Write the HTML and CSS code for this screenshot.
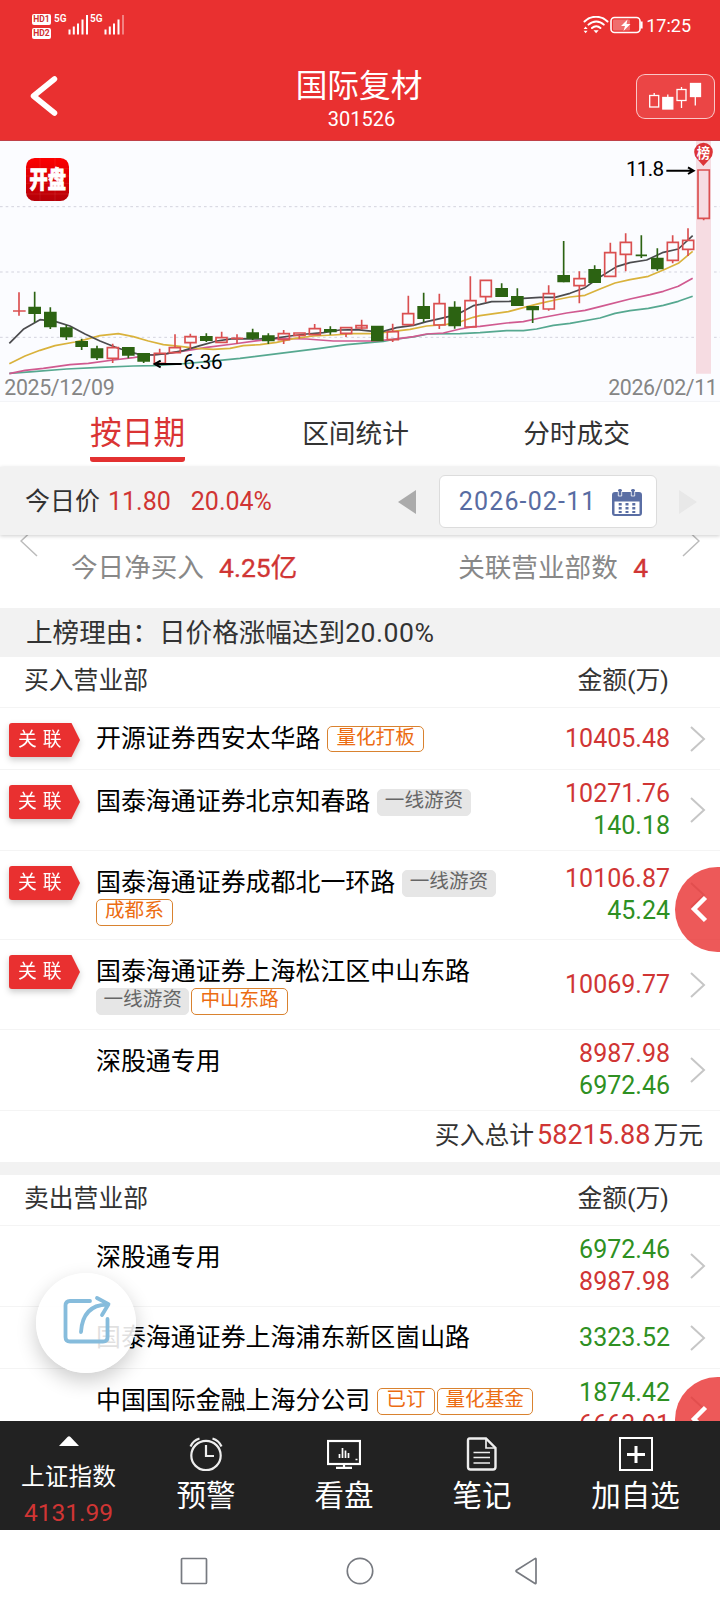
FILE: index.html
```
<!DOCTYPE html>
<html lang="zh-CN">
<head>
<meta charset="utf-8">
<title>国际复材 301526</title>
<link rel="stylesheet" href="styles.css">
</head>
<body>
<div class="screen">
  <header class="top">
    <div class="status">
      <div class="status-left">
        <div class="hd"><span>HD1</span><span>HD2</span></div>
        <span class="net">5G</span>
        <svg class="signal" width="21" height="20" viewBox="0 0 21 20"><path d="M1.500 19.500v-5M5.800 19.500v-8M10 19.500v-11M14.500 19.500v-15M19 19.500V0" stroke="#fff" stroke-width="2"/></svg>
        <span class="net net-second">5G</span>
        <svg class="signal" width="21" height="20" viewBox="0 0 21 20"><path d="M1.500 19.500v-5M5.800 19.500v-8M10 19.500v-11M14.500 19.500v-15" stroke="#fff" stroke-width="2"/><path d="M19 19.500V0" stroke="#fff" stroke-opacity=".4" stroke-width="2"/></svg>
      </div>
      <div class="status-right">
        <svg width="26" height="18" viewBox="0 0 26 18" fill="none" stroke="#fff" stroke-width="2" stroke-linecap="round"><path d="M1.500 5.500C8-.8 18-.8 24.500 5.500M5.500 8.600C10 4.300 16.500 4.300 20.800 8.600M9 12C11.500 9.800 15 9.800 17.400 12"/><path d="M10.500 14.200h5.200l-2.600 3zM.6 13l2-2.500 2 2.500zM.6 14.800l2 2.500 2-2.500z" fill="#fff" stroke="none"/></svg>
        <svg width="33" height="18" viewBox="0 0 33 18"><rect x="1" y="1.500" width="29" height="15" rx="3.500" fill="none" stroke="#fff" stroke-width="1.600"/><rect x="3" y="3.500" width="17" height="11" rx="1" fill="#fff" fill-opacity=".3"/><path d="M17.500 3.500l-6.500 6.500h4l-1.500 5 7-7h-4z" fill="#fff"/><path d="M31.500 5.500v7" stroke="#fff" stroke-width="2.200"/></svg>
        <span class="clock">17:25</span>
      </div>
    </div>
    <div class="titlebar">
      <svg class="back" width="28" height="42" viewBox="0 0 28 42"><path d="M24.500 4L3.500 21 24.500 38" fill="none" stroke="#fff" stroke-width="5.500" stroke-linecap="round" stroke-linejoin="round"/></svg>
      <div class="title"><h1>国际复材</h1><span>301526</span></div>
      <div class="kbtn">
        <svg width="54" height="28" viewBox="0 0 54 28" fill="none" stroke="#fff" stroke-width="1.300"><rect x="1.700" y="13.500" width="9" height="11.500"/><path d="M6.200 11v2.500M19.800 12.500v3M33.500 5v2.500M33.500 18.500V26M47.300 14v9.500"/><rect x="14.800" y="15.500" width="10" height="11.500" fill="#fff"/><rect x="29" y="7.500" width="9" height="11"/><rect x="42.500" y="1.500" width="10" height="13" fill="#fff"/></svg>
      </div>
    </div>
  </header>

  <section class="chart">
    <svg width="720" height="261" viewBox="0 3 2160 783">
      <defs><linearGradient id="logo" x2="0" y2="1"><stop stop-color="#fd0000"/><stop offset="1" stop-color="#b50008"/></linearGradient></defs>
      <path d="M0 200H2160M0 396H2160M0 592H2160" stroke="#d3d3de" stroke-width="3" stroke-dasharray="8 9"/>
      <path d="M2088 3h45V701h-45z" fill="#f6dce2"/>
      <g fill="none" stroke-width="5" stroke-linejoin="round">
        <polyline stroke="#56a890" points="28,700 100,695 200,687 300,682 400,678 460,677 540,672 630,664 720,655 840,640 960,625 1040,614 1150,604 1180,598 1240,591 1285,582 1380,581 1440,578 1520,572 1570,572 1610,567 1660,556 1710,550 1800,534 1845,520 1890,512 1945,505 1990,496 2035,484 2078,469"/>
        <polyline stroke="#d05a90" points="28,701 75,691 130,685 210,674 265,670 340,660 400,653 450,645 500,641 560,632 620,622 700,612 780,601 840,595 920,597 1000,603 1120,603 1180,598 1240,590 1280,582 1330,579 1380,567 1420,560 1440,559 1520,549 1570,545 1620,534 1700,519 1755,511 1800,500 1890,477 1950,464 1990,454 2035,439 2078,415"/>
        <polyline stroke="#d9b23c" points="28,671 75,648 120,631 165,617 225,606 255,599 300,587 355,581 400,590 445,603 490,614 540,619 590,625 640,628 690,625 730,617 780,614 830,607 880,596 940,588 1000,585 1060,581 1120,581 1180,574 1230,568 1280,558 1340,553 1385,544 1420,532 1440,527 1525,515 1570,503 1620,490 1665,480 1710,471 1755,466 1800,447 1845,429 1890,419 1945,409 1990,390 2035,370 2078,334"/>
        <polyline stroke="#4b4b4e" points="28,610 70,568 120,539 165,544 210,558 255,582 300,603 345,621 380,633 420,644 460,645 500,641 550,632 600,617 650,603 700,596 770,597 820,595 870,588 920,582 970,578 1020,570 1070,569 1120,574 1150,574 1190,563 1240,556 1280,545 1320,536 1370,524 1420,497 1440,493 1475,485 1530,484 1570,475 1620,472 1665,472 1710,460 1755,443 1800,411 1850,380 1890,368 1940,360 1990,337 2035,327 2078,287"/>
      </g>
      <g fill="none" stroke="#2c6312">
        <path stroke-width="5" d="M104 455V547M151 502V567M199 555V600M245 596V630M291 617V660M385 621V655M431 639V669M619 580V606M758 566V600M805 580V612M991 559V584M1271 458V546M1364 484V566M1505 430V471M1552 445V498M1598 498V549M1691 303V427M1784 376V429M1924 286V354M1907 346H1941M1972 325V392"/>
        <path stroke-width="38" d="M104 500V522M151 515V562M199 562V592M245 603V621M291 625V655M385 621V647M431 639V665M619 588V603M758 577V596M805 586V604M991 567V577M1132 557V604M1271 498V537M1364 500V559M1505 444V471M1552 468V498M1598 498V511M1691 405V427M1784 387V429M1972 353V388"/>
      </g>
      <g fill="none" stroke="#da4f50" stroke-width="5">
        <path d="M57 457V527M39 513H77M338 611V621M338 656V669M479 626V638M525 583V622M571 581V589M571 609V628M665 575V592M711 583V612M693 595H730M851 570V580M851 601V612M898 588V596M944 552V565M1038 580V591M1085 539V569M1178 551V574M1178 600V606M1225 467V520M1318 461V490M1318 556V567M1411 409V481M1457 471V487M1646 436V460M1646 507V512M1738 394V416M1738 438V490M1831 308V337M1877 280V307M1877 344V394M2018 286V307M2018 361V370M2064 265V300M2064 328V348M2111 235V241"/>
        <path d="M322 623h33v32h-33zM463 640h33v30h-33zM508 623h33v15h-33zM555 590h33v18h-33zM648 593h33v14h-33zM835 581h33v18h-33zM882 579h33v7h-33zM928 566h33v18h-33zM1022 563h33v17h-33zM1068 557h33v7h-33zM1162 575h33v24h-33zM1208 521h33v33h-33zM1302 491h33v64h-33zM1395 482h33v79h-33zM1441 421h33v49h-33zM1630 461h33v46h-33zM1722 416h33v21h-33zM1814 338h33v71h-33zM1861 307h33v36h-33zM2002 307h33v54h-33zM2048 301h33v27h-33zM2094 90h34v145h-34z"/>
      </g>
      <path d="M545 672H470M482 662L464 672 482 682M1999 92H2078M2064 82L2081 92 2064 102" stroke="#000" stroke-width="6" fill="none"/>
      <path d="M2110 78L2091 56A28 28 0 1 1 2130 56z" fill="#dc3438"/>
      <text x="2110" y="53" class="ct mark" text-anchor="middle">榜</text>
      <text x="550" y="686" class="ct" textLength="118">6.36</text>
      <text x="1878" y="108" class="ct" textLength="114">11.8</text>
      <text x="13" y="765" class="ct date" textLength="331">2025/12/09</text>
      <text x="1825" y="765" class="ct date" textLength="328">2026/02/11</text>
      <rect x="78" y="54" width="129" height="129" rx="26" fill="url(#logo)"/>
      <path d="M78 86H207M78 108H207M78 130H207M78 162H207M120 54V183M165 54V183" stroke="#fff" stroke-opacity=".12" stroke-width="2"/>
      <text class="ct logo" text-anchor="middle" transform="translate(143 145) scale(.96 1.240)">开盘</text>
    </svg>
  </section>

  <nav class="tabs"><span class="tab active">按日期</span><span class="tab">区间统计</span><span class="tab">分时成交</span></nav>

  <section class="pricebar">
    <span class="label">今日价</span><span class="red price">11.80</span><span class="red pct">20.04%</span>
    <svg class="prev" width="18" height="24" viewBox="0 0 18 24"><path d="M0 12L18 0V24z" fill="#ababab"/></svg>
    <div class="datebox"><span>2026-02-11</span>
      <svg width="30" height="28" viewBox="0 0 30 28"><path d="M3 3H6V1.500q0-1.500 1.500-1.500h1q1.500 0 1.500 1.500V3H19V1.500q0-1.500 1.500-1.500h1q1.500 0 1.500 1.500V3h4q3 0 3 3V24q0 3-3 3H3q-3 0-3-3V6q0-3 3-3z" fill="#5a6ea4"/><path d="M2.500 12.500H27.500V25H2.500z" fill="#fff"/><path d="M8.200 14V24M15 14V24M21.800 14V24" stroke="#5a6ea4" stroke-width="3" stroke-dasharray="2.400 1.600"/><path d="M6.300 2v5h3.400V2M19.300 2v5h3.400V2" fill="none" stroke="#fff" stroke-width=".8"/></svg>
    </div>
    <svg class="next" width="18" height="24" viewBox="0 0 18 24"><path d="M18 12L0 0V24z" fill="#e8e8e8"/></svg>
  </section>

  <main class="scroll">
    <section class="summary">
      <svg class="edge" width="18" height="22" viewBox="0 0 18 22"><path d="M17 21L1 6 17-9" fill="none" stroke="#bbb" stroke-width="1.500"/></svg>
      <span class="s-label s-net">今日净买入</span><b class="red">4.25亿</b>
      <span class="s-label s-count">关联营业部数</span><b class="red">4</b>
      <svg class="edge edge-right" width="18" height="22" viewBox="0 0 18 22"><path d="M1 21L17 6 1-9" fill="none" stroke="#bbb" stroke-width="1.500"/></svg>
    </section>
    <div class="reason">上榜理由：日价格涨幅达到<span>20.00%</span></div>

    <div class="head"><span>买入营业部</span><span>金额(万)</span></div>
    <div class="row h62"><div class="flag"><i>关<u></u>联</i></div><div class="name">开源证券西安太华路<em class="tag first">量化打板</em></div><div class="amt"><span class="red">10405.48</span></div><svg class="chev" viewBox="0 0 16 26"><path d="M1 1L14 13 1 25"/></svg></div>
    <div class="row h81"><div class="flag"><i>关<u></u>联</i></div><div class="name">国泰海通证券北京知春路<em class="tag grey first">一线游资</em></div><div class="amt"><span class="red">10271.76</span><span class="green">140.18</span></div><svg class="chev" viewBox="0 0 16 26"><path d="M1 1L14 13 1 25"/></svg></div>
    <div class="row h89"><div class="flag"><i>关<u></u>联</i></div><div class="name">国泰海通证券成都北一环路<em class="tag grey first">一线游资</em><div class="tags"><em class="tag">成都系</em></div></div><div class="amt"><span class="red">10106.87</span><span class="green">45.24</span></div><svg class="chev" viewBox="0 0 16 26"><path d="M1 1L14 13 1 25"/></svg>
      <div class="bubble"><svg width="18" height="28" viewBox="0 0 18 28"><path d="M15.500 2.500L4 14 15.500 25.500" fill="none" stroke="#fff" stroke-width="4.500"/></svg></div></div>
    <div class="row h90"><div class="flag"><i>关<u></u>联</i></div><div class="name">国泰海通证券上海松江区中山东路<div class="tags"><em class="tag grey">一线游资</em><em class="tag">中山东路</em></div></div><div class="amt"><span class="red">10069.77</span></div><svg class="chev" viewBox="0 0 16 26"><path d="M1 1L14 13 1 25"/></svg></div>
    <div class="row h81"><div class="name">深股通专用</div><div class="amt"><span class="red">8987.98</span><span class="green">6972.46</span></div><svg class="chev" viewBox="0 0 16 26"><path d="M1 1L14 13 1 25"/></svg></div>
    <div class="total">买入总计<span class="red">58215.88</span>万元</div>

    <div class="head"><span>卖出营业部</span><span>金额(万)</span></div>
    <div class="row h81"><div class="name">深股通专用</div><div class="amt"><span class="green">6972.46</span><span class="red">8987.98</span></div><svg class="chev" viewBox="0 0 16 26"><path d="M1 1L14 13 1 25"/></svg></div>
    <div class="row h62"><div class="name">国泰海通证券上海浦东新区崮山路</div><div class="amt"><span class="green">3323.52</span></div><svg class="chev" viewBox="0 0 16 26"><path d="M1 1L14 13 1 25"/></svg>
      <div class="share"><svg width="50" height="52" viewBox="0 0 50 52" fill="none" stroke="#86bcdc" stroke-width="3.800" stroke-linecap="round" stroke-linejoin="round"><path d="M27 6H7Q2.500 6 2.500 10.500V42Q2.500 46.500 7 46.500H40Q44.500 46.500 44.500 42V24"/><path d="M18 37C19 20 27 10 44 9.500M34 3l11.500 6.200L39 20"/></svg></div></div>
    <div class="row h81"><div class="name">中国国际金融上海分公司<em class="tag first">已订</em><em class="tag">量化基金</em></div><div class="amt"><span class="green">1874.42</span><span class="red">6663.91</span></div><svg class="chev" viewBox="0 0 16 26"><path d="M1 1L14 13 1 25"/></svg>
      <div class="bubble low"><svg width="18" height="28" viewBox="0 0 18 28"><path d="M15.500 2.500L4 14 15.500 25.500" fill="none" stroke="#fff" stroke-width="4.500"/></svg></div></div>
  </main>

  <footer class="toolbar">
    <div class="index"><svg width="20" height="10" viewBox="0 0 20 10"><path d="M0 10L8.500 1Q10-.5 11.500 1L20 10z" fill="#fff"/></svg><span>上证指数</span><span class="red val">4131.99</span></div>
    <div class="tool"><svg width="34" height="34" viewBox="0 0 34 34" fill="none" stroke="#eee" stroke-width="2.200"><circle cx="17" cy="18.500" r="14.700"/><path d="M17 8v11h8M1.500 9.500Q4 3.500 10.500 1.500M32.500 9.500Q30 3.500 23.500 1.500"/></svg><span>预警</span></div>
    <div class="tool"><svg width="34" height="34" viewBox="0 0 34 34" fill="none" stroke="#fff" stroke-width="2.200"><rect x="1" y="4" width="32" height="23"/><path d="M17 27v3M9 30.800H25"/><path d="M12.500 21v-4M15.500 21V11M18.500 21v-7.500M21.500 21v-5M28.500 22.500h2" stroke-width="1.700"/></svg><span>看盘</span></div>
    <div class="tool"><svg width="34" height="34" viewBox="0 0 34 34" fill="none" stroke="#eee" stroke-width="2.400"><path d="M4.500 1.500H21L30.500 11V30Q30.500 32.500 28 32.500H5.500Q3 32.500 3 30V3.500Q3 1.500 4.500 1.500z"/><path d="M21 2v9H30M8.500 15.500H25M8.500 20.500H25M8.500 26H25" stroke-width="1.700"/></svg><span>笔记</span></div>
    <div class="tool wide"><svg width="34" height="34" viewBox="0 0 34 34" fill="none" stroke="#fff"><rect x="1" y="1" width="32" height="32" stroke-width="2"/><path d="M8 17.500H26M17 9V26" stroke-width="3"/></svg><span>加自选</span></div>
  </footer>
  <div class="sysnav">
    <svg width="28" height="28" viewBox="0 0 28 28"><rect x="1.500" y="1.500" width="25" height="25" rx="1" fill="none" stroke="#777a80" stroke-width="1.700"/></svg>
    <svg width="28" height="28" viewBox="0 0 28 28"><circle cx="14" cy="14" r="12.700" fill="none" stroke="#777a80" stroke-width="1.700"/></svg>
    <svg width="28" height="28" viewBox="0 0 28 28"><path d="M24 2.200V25.800Q24 27 23 26.400L4.500 14.800Q3.500 14 4.500 13.200L23 1.600Q24 1 24 2.200z" fill="none" stroke="#777a80" stroke-width="1.700"/></svg>
  </div>
</div>
</body>
</html>
```
FILE: styles.css
```
* { box-sizing: border-box; }
body { margin: 0; font-family: Roboto, "Noto Sans CJK SC", sans-serif; color: #333; background: #fff; }
svg { display: block; flex: none; }
.screen { width: 720px; height: 1612px; display: flex; flex-direction: column; overflow: hidden; background: #fff; white-space: nowrap; }
.screen > * { flex: none; }
.red { color: #d03534; }
.green { color: #2e9022; }

/* header */
.top { height: 141px; background: #e93030; border-bottom: 1px solid #c04048; color: #fff; }
.status { height: 50px; display: flex; justify-content: space-between; padding: 14px 29px 0 32px; }
.status-left, .status-right { display: flex; align-items: flex-start; }
.hd { display: flex; flex-direction: column; gap: 3px; }
.hd span { width: 19px; height: 11px; border-radius: 2px; background: #fff; color: #d03030; font-size: 8.500px; line-height: 11px; font-weight: 700; text-align: center; }
.net { margin-left: 3px; width: 14px; font-size: 10px; line-height: 10px; font-weight: 600; }
.net-second { margin-left: 1px; width: 14px; }
.signal { margin-top: 1px; }
.status-right { gap: 1px; }
.status-right svg { margin-top: 2px; }
.clock { margin-left: 2px; font-size: 18px; line-height: 24px; }
.titlebar { display: flex; padding: 0 5px 0 30px; }
.back { margin-top: 25px; }
.title { flex: 1; padding-left: 24px; display: flex; flex-direction: column; align-items: center; }
.title h1 { margin: 16px 0 0; font-size: 31.700px; line-height: 42px; font-weight: 400; }
.title span { margin-left: 5px; font-size: 20px; line-height: 22px; }
.kbtn { margin-top: 24px; width: 79px; height: 45px; border: 1.500px solid rgba(255,255,255,.7); border-radius: 9px; background: rgba(255,255,255,.1); padding: 7px 0 0 11px; }

/* candlestick chart */
.chart { height: 261px; background: #fbfcff; border-bottom: 1px solid #f3f4f7; }
.ct { font-size: 62px; fill: #000; }
.date { fill: #858585; font-size: 64px; }
.mark { fill: #fff; font-size: 40px; font-weight: 700; }
.logo { fill: #fff; stroke: #fff; stroke-width: 2; font-size: 57px; font-weight: 900; }

/* tabs */
.tabs { height: 65px; display: flex; padding: 0 33px 0 26px; }
.tab { flex: 1; text-align: center; font-size: 26.700px; line-height: 64px; }
.tab.active { flex: none; width: 95px; margin: 0 60px 0 64px; height: 60px; color: #da3434; font-size: 31.700px; border-bottom: 5px solid #e33131; border-radius: 0 0 3px 3px; }

/* price bar */
.pricebar { height: 68px; background: #f2f2f2; display: flex; align-items: center; padding-left: 25px; font-size: 25px; box-shadow: 0 1px 4px rgba(0,0,0,.2); position: relative; z-index: 2; }
.label { padding-bottom: 5px; }
.price { margin-left: 8px; }
.pct { margin-left: 20px; width: 82px; }
.prev { margin-left: 125px; margin-top: 2px; }
.datebox { margin-left: 23px; width: 218px; height: 53px; border: 1px solid #dcdcdc; border-radius: 6px; background: #fff; display: flex; align-items: center; padding-left: 19px; color: #586ca2; }
.datebox span { width: 153px; letter-spacing: 1.150px; }
.datebox svg { margin-top: 3px; }
.next { margin-left: 22px; margin-top: 2px; }

/* scrolling list */
.scroll { height: 886px; overflow: hidden; position: relative; }
.summary { height: 73px; display: flex; font-size: 26.600px; line-height: 65px; padding: 0 20px; }
.edge-right { margin-left: auto; }
.summary b { font-weight: 400; font-size: 26.500px; -webkit-text-stroke: .35px #d03534; }
.s-label { color: #888; }
.s-net { margin-left: 33px; width: 148px; }
.s-count { margin-left: 161px; width: 175px; }
.reason { height: 49px; background: #f2f2f2; padding-left: 26px; font-size: 26.600px; line-height: 50px; }
.reason span { letter-spacing: .5px; }
.head { height: 51px; padding: 0 51px 0 24px; display: flex; justify-content: space-between; font-size: 24.800px; line-height: 48px; border-bottom: 1px solid #f4f4f4; }
.row { position: relative; display: flex; padding: 0 14px 0 96px; border-bottom: 1px solid #f4f4f4; }
.h62 { height: 62px; }
.h81 { height: 81px; }
.h89 { height: 89px; }
.h90 { height: 90px; }
.flag { flex: none; width: 71px; height: 34px; margin: 15px 16px 0 -87px; filter: drop-shadow(0 3px 3px rgba(0,0,0,.2)); }
.flag i { display: flex; height: 34px; padding-left: 9px; background: #e93030; color: #fff; font-style: normal; font-size: 18.800px; line-height: 34px; border-radius: 3px 0 0 3px; clip-path: polygon(0 0, 88% 0, 100% 50%, 88% 100%, 0 100%); }
.flag u { width: 6px; }
.name { flex: 1; min-width: 0; padding-top: 15px; color: #000; font-size: 24.950px; line-height: 33px; }
.h62 .name { padding-top: 14px; }
.tag { display: inline-block; vertical-align: top; height: 27px; margin: 4px 0 0 2px; padding: 0 8px; border: 1.500px solid #d9822f; border-radius: 5px; color: #ec6c12; font-size: 19.600px; line-height: 22px; font-style: normal; }
.tag.first { margin-left: 7px; }
.h62 .tag { height: 26px; }
.grey { padding: 0 6.500px; color: #666; background: #e6e6e6; border-color: #e6e6e6; }
.tags { display: flex; height: 27px; }
.tags .tag { margin-top: 0; }
.tags .tag:first-child { margin-left: 0; }
.amt { display: flex; flex-direction: column; justify-content: center; align-items: flex-end; width: 120px; margin-left: -40px; font-size: 25px; line-height: 32px; }
.chev { width: 16px; height: 26px; margin-left: 20px; align-self: center; fill: none; stroke: #c6c6c6; stroke-width: 2; }
.total { height: 64px; border-bottom: 13px solid #f2f2f2; padding-right: 17px; text-align: right; font-size: 24.800px; line-height: 48px; }
.total span { font-size: 27px; margin: 0 3px; }

/* floating controls */
.bubble { position: absolute; left: 675px; top: 16px; width: 85px; height: 85px; z-index: 2; border-radius: 50%; background: rgba(233,48,48,.8); padding: 28px 0 0 15px; }
.bubble.low { top: 8px; }
.share { position: absolute; left: 36px; top: -34px; width: 100px; height: 100px; z-index: 2; border-radius: 50%; background: rgba(255,255,255,.88); box-shadow: 0 8px 20px rgba(0,0,0,.2); padding: 22px 0 0 27px; }

/* bottom bars */
.toolbar { height: 109px; background: #222; display: flex; color: #fff; }
.index { width: 137px; display: flex; flex-direction: column; align-items: center; padding-top: 15px; font-size: 23.700px; line-height: 34px; }
.index span { margin-top: 14px; }
.index .val { margin-top: 2px; font-size: 24.500px; }
.tool { width: 138px; display: flex; flex-direction: column; align-items: center; padding-top: 16px; font-size: 29.500px; line-height: 44px; }
.tool span { margin-top: 3px; }
.wide { width: 169px; }
.sysnav { height: 82px; display: flex; justify-content: center; align-items: center; gap: 138px; }
```
